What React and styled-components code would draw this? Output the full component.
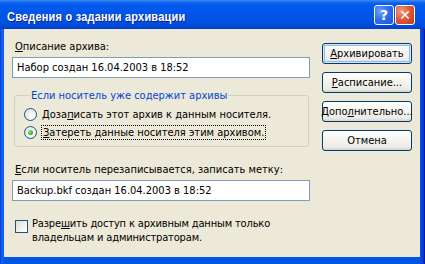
import React from 'react';
import styled, { createGlobalStyle } from 'styled-components';

const GlobalStyle = createGlobalStyle`
  html, body {
    margin: 0;
    padding: 0;
    background: #0a246a;
  }
`;

const Window = styled.div`
  width: 425px;
  height: 264px;
  display: flex;
  flex-direction: column;
  background: linear-gradient(to right, #0831d9 0, #166aee 2px, #0055e5 4px, #0055e5 419px, #0a3ed8 423px, #00138c 425px);
  font-family: "DejaVu Sans Condensed", "DejaVu Sans", sans-serif;
  font-size: 11px;
  color: #000;
  overflow: hidden;
`;

const TitleBar = styled.div`
  height: 29px;
  flex: none;
  display: flex;
  align-items: center;
  justify-content: space-between;
  padding: 0 10px 0 7px;
  box-sizing: border-box;
  background: linear-gradient(to bottom, #3d8cf7 0, #0b60ea 3px, #0058ee 6px, #0054e3 20px, #0048d8 27px, #003bc7 29px);
`;

const Title = styled.div`
  color: #fff;
  font-family: "Liberation Sans", Arial, sans-serif;
  font-weight: bold;
  font-size: 11px;
  letter-spacing: 0.2px;
  transform: scaleY(1.12);
  text-shadow: 1px 1px 0 #0a1f8a;
  padding-top: 2px;
`;

const Controls = styled.div`
  display: flex;
  gap: 1px;
  margin-top: 1px;
`;

const CtlButton = styled.div`
  width: 20px;
  height: 20px;
  box-sizing: border-box;
  border: 1px solid #fff;
  border-radius: 3px;
  display: flex;
  align-items: center;
  justify-content: center;
  color: #fff;
  font-family: "DejaVu Sans", sans-serif;
  font-weight: bold;
  font-size: 14px;
  background: ${p => p.$close
    ? 'radial-gradient(circle at 30% 30%, #f0a186 0, #e2583a 45%, #c3381b 100%)'
    : 'radial-gradient(circle at 30% 30%, #6fa4ff 0, #2d6ff3 45%, #1b52d6 100%)'};
`;

const Frame = styled.div`
  flex: 1;
  margin: 0 5px 7px 4px;
  background: #ece9d8;
  display: flex;
  gap: 12px;
  padding: 11px 8px 0 8px;
`;

const LeftCol = styled.div`
  width: 298px;
  display: flex;
  flex-direction: column;
`;

const RightCol = styled.div`
  width: 90px;
  display: flex;
  flex-direction: column;
  gap: 8px;
  padding-top: 3px;
`;

const Label = styled.div`
  line-height: 13px;
  margin-left: 3px;
  margin-top: ${p => p.$top || 0}px;
  white-space: nowrap;
`;

const Key = styled.span`
  text-decoration: underline;
  text-underline-offset: 1px;
`;

const TextBox = styled.div`
  height: 21px;
  box-sizing: border-box;
  margin-top: 4px;
  border: 1px solid #7f9db9;
  background: #fff;
  padding: 0 4px;
  display: flex;
  align-items: center;
  white-space: nowrap;
`;

const Group = styled.fieldset`
  margin: 11px 1px 0 2px;
  padding: 3px 8px 5px 9px;
  border: 1px solid #d0d0bf;
  border-radius: 3px;
  display: flex;
  flex-direction: column;
`;

const Legend = styled.legend`
  color: #0046d5;
  line-height: 13px;
  padding: 0 1px;
  margin-left: 6px;
`;

const OptionRow = styled.div`
  height: 18px;
  display: flex;
  align-items: center;
  gap: 5px;
  white-space: nowrap;
`;

const Radio = styled.span`
  width: 13px;
  height: 13px;
  flex: none;
  box-sizing: border-box;
  border-radius: 50%;
  border: 1px solid #1c5180;
  background: radial-gradient(circle at 65% 65%, #ffffff 0, #f3f3ef 40%, #dcdcd5 100%);
  display: flex;
  align-items: center;
  justify-content: center;

  &::after {
    content: '';
    display: ${p => (p.$checked ? 'block' : 'none')};
    width: 5px;
    height: 5px;
    border-radius: 50%;
    background: radial-gradient(circle at 35% 35%, #8ee88a 0, #3cbb38 50%, #1f8e1c 100%);
  }
`;

const Focus = styled.span`
  outline: 1px dotted #000;
  outline-offset: 0;
  padding: 0 1px;
  line-height: 13px;
`;

const CheckRow = styled.div`
  margin-top: 16px;
  margin-left: 3px;
  display: flex;
  gap: 4px;
  align-items: flex-start;
`;

const CheckBox = styled.span`
  width: 13px;
  height: 13px;
  flex: none;
  box-sizing: border-box;
  margin-top: 3px;
  border: 1px solid #1c5180;
  background: linear-gradient(135deg, #dcdcd5 0, #f3f3ef 60%, #ffffff 100%);
`;

const CheckText = styled.div`
  line-height: 14px;
  letter-spacing: -0.15px;
`;

const Button = styled.div`
  height: 21px;
  box-sizing: border-box;
  border: 1px solid #003c74;
  border-radius: 3px;
  background: linear-gradient(to bottom, #ffffff 0, #f6f5f0 40%, #ecebe5 85%, #d6d0c5 100%);
  display: flex;
  align-items: center;
  justify-content: center;
  white-space: nowrap;
  box-shadow: ${p => (p.$default ? 'inset 0 0 0 1px #cee7ff, inset 0 0 0 2px #98b8ea' : 'none')};
`;

export default function App() {
  return (
    <>
      <GlobalStyle />
      <Window>
        <TitleBar>
          <Title>Сведения о задании архивации</Title>
          <Controls>
            <CtlButton>?</CtlButton>
            <CtlButton $close>✕</CtlButton>
          </Controls>
        </TitleBar>
        <Frame>
          <LeftCol>
            <Label><Key>О</Key>писание архива:</Label>
            <TextBox>Набор создан 16.04.2003 в 18:52</TextBox>
            <Group>
              <Legend>Если носитель уже содержит архивы</Legend>
              <OptionRow>
                <Radio />
                <span>Доза<Key>п</Key>исать этот архив к данным носителя.</span>
              </OptionRow>
              <OptionRow>
                <Radio $checked />
                <Focus><Key>З</Key>атереть данные носителя этим архивом.</Focus>
              </OptionRow>
            </Group>
            <Label $top={16}><Key>Е</Key>сли носитель перезаписывается, записать метку:</Label>
            <TextBox>Backup.bkf создан 16.04.2003 в 18:52</TextBox>
            <CheckRow>
              <CheckBox />
              <CheckText>
                Разре<Key>ш</Key>ить доступ к архивным данным только<br />
                владельцам и администраторам.
              </CheckText>
            </CheckRow>
          </LeftCol>
          <RightCol>
            <Button $default><Key>А</Key>рхивировать</Button>
            <Button><Key>Р</Key>асписание...</Button>
            <Button>Допо<Key>л</Key>нительно...</Button>
            <Button>Отмена</Button>
          </RightCol>
        </Frame>
      </Window>
    </>
  );
}
